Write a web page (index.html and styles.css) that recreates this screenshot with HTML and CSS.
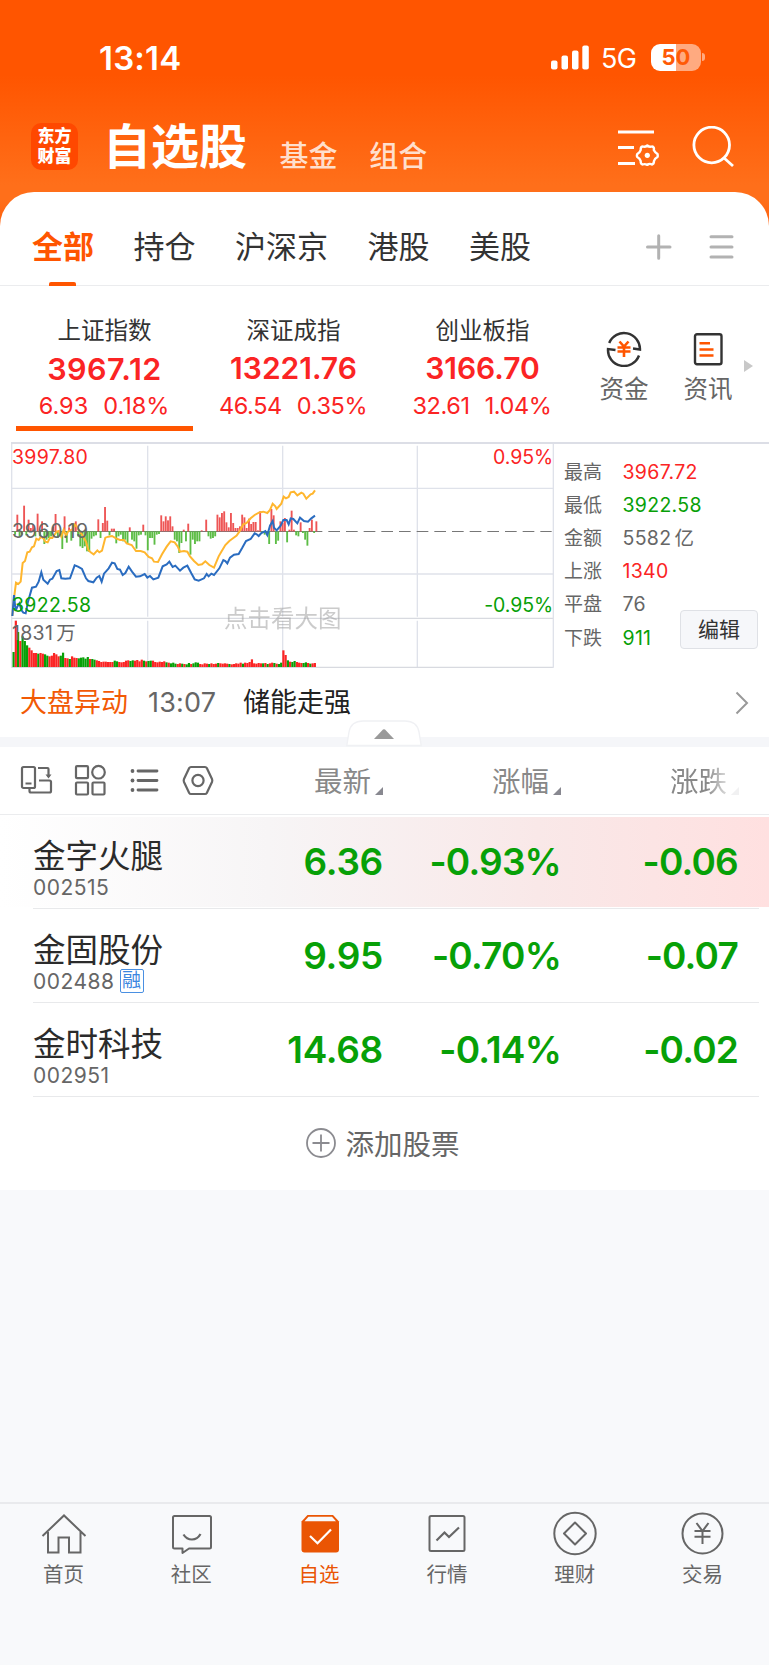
FILE: index.html
```html
<!DOCTYPE html>
<html lang="zh-CN">
<head>
<meta charset="UTF-8">
<title>自选股</title>
<link rel="stylesheet" href="styles.css">
</head>
<body>
<div class="app">
	<div class="status">
		<span class="time">13:14</span>
		<svg class="signal" width="40" height="26" viewBox="0 0 40 26" fill="#fff">
			<rect x="1" y="15.500" width="6.500" height="9" rx="2"/>
			<rect x="11.500" y="10.500" width="6.500" height="14" rx="2"/>
			<rect x="22" y="5.500" width="6.500" height="19" rx="2"/>
			<rect x="32.300" y="0.500" width="6.500" height="24" rx="2"/>
		</svg>
		<span class="net">5G</span>
		<span class="battery">50</span>
		<span class="cap"></span>
	</div>
	<div class="nav">
		<div class="logo">东方<br>财富</div>
		<h1>自选股</h1>
		<span class="sub">基金</span>
		<span class="sub">组合</span>
		<svg class="nav-set" width="42" height="38" viewBox="0 0 42 38" fill="none" stroke="#fff" stroke-width="2.800">
			<path d="M0 4h36M0 19.500h16M0 35.500h17"/>
			<path stroke-width="2.400" stroke-linejoin="round" d="M24.500 18.500Q27 19.500 29.300 17.500Q31.500 19.500 34 18.500Q36.500 19 35.800 22Q37 24.500 39.500 26Q40 28 39.500 29Q36.500 30.500 36 33Q36 36 34 36.500Q31.500 35 29.300 37Q27 35.500 24.500 36.500Q22.500 36 22.700 33Q22 30.500 19.300 29Q18.500 28 19.300 26Q22 24.500 22.700 22Q22.500 19 24.500 18.500Z"/>
			<circle cx="29.300" cy="27.300" r="2.600" fill="#fff" stroke="none"/>
		</svg>
		<svg class="nav-search" width="42" height="42" viewBox="0 0 42 42" fill="none" stroke="#fff" stroke-width="2.800">
			<circle cx="19.700" cy="19" r="17.800"/>
			<path d="M31.500 31.500L41 40"/>
		</svg>
	</div>

	<div class="panel">
		<div class="tabs">
			<span class="on">全部</span>
			<span>持仓</span>
			<span>沪深京</span>
			<span>港股</span>
			<span>美股</span>
			<svg width="88" height="26" viewBox="0 0 88 26" fill="none" stroke="#b2b2b2" stroke-width="3" stroke-linecap="round">
				<path d="M1.500 13h22.500M12.700 1.800v22.500M65 2.700h21M65 13h21M65 23h21"/>
			</svg>
		</div>

		<div class="indexes">
			<div class="idx on">
				<div class="name">上证指数</div>
				<div class="price">3967.12</div>
				<div class="chg"><span>6.93</span><span>0.18%</span></div>
			</div>
			<div class="idx">
				<div class="name">深证成指</div>
				<div class="price">13221.76</div>
				<div class="chg"><span>46.54</span><span>0.35%</span></div>
			</div>
			<div class="idx">
				<div class="name">创业板指</div>
				<div class="price">3166.70</div>
				<div class="chg"><span>32.61</span><span>1.04%</span></div>
			</div>
			<div class="entry">
				<svg width="36" height="36" viewBox="0 0 36 36" fill="none" stroke="#333" stroke-width="2.400">
					<path d="M3.200 12A16 16 0 0 1 34 18.500L27 17.500M33 24.500A16 16 0 0 1 2 18L9.500 19"/>
					<path stroke="#ff5500" stroke-width="2.600" d="M13.500 10.500L18 15.500L22.500 10.500M11.500 16.500h13M11.500 20.500h13M18 15v11"/>
				</svg>
				<span>资金</span>
			</div>
			<div class="entry">
				<svg width="36" height="36" viewBox="0 0 36 36" fill="none" stroke="#333" stroke-width="2.400">
					<rect x="5" y="3.200" width="26.500" height="30" rx="2"/>
					<path stroke="#ff5500" stroke-width="2.600" d="M9.500 12.200h10.500M9.500 18.500h14M9.500 24.500h14"/>
				</svg>
				<span>资讯</span>
			</div>
			<i class="more"></i>
		</div>

		<div class="market">
			<div class="chart">
				<!-- 坐标为3倍图 -->
				<svg width="554" height="227" viewBox="0 21 1662 681" fill="none">
					<g stroke="#dfe2ea" stroke-width="4">
						<path d="M35 21V698M443 32V545M443 557V696M848 32V545M848 557V696M1252 32V545M1252 557V696"/>
						<path d="M35 160H1660M35 417H1660"/>
						<path stroke="#d8dae0" stroke-width="4" d="M35 550H1660M35 697H1660"/>
						<path d="M1660 21V698"/>
					</g>
					<path stroke="#777" stroke-width="3.500" d="M35 289.500H950"/>
					<path stroke="#777" stroke-width="3.500" stroke-dasharray="35 18" d="M932 289.500H1655"/>
					<g id="bars"></g>
					<g id="vol"></g>
					<polyline stroke="#ffb62e" stroke-width="6" points="37,543 42,490 48,443 55,447 62,440 68,384 75,378 82,352 89,350 96,337 102,334 109,311 116,315 123,305 130,310 136,320 143,322 150,308 157,309 163,300 170,290 177,288 184,305 191,284 198,303 204,290 211,286 218,282 223,268 231,276 240,290 247,300 258,320 265,345 272,352 281,358 292,346 298,352 306,347 316,308 325,305 336,303 348,310 360,315 372,315 380,325 395,330 408,348 422,348 434,352 446,366 456,370 462,380 474,381 486,358 500,335 512,319 524,322 534,336 540,350 552,348 562,350 570,364 582,378 595,390 606,388 616,379 628,390 642,398 656,364 664,350 676,330 688,318 696,312 710,302 718,290 730,268 740,264 752,250 764,240 778,232 790,230 802,234 810,225 818,206 826,214 830,222 844,206 851,185 858,190 866,186 872,172 882,170 892,181 904,173 910,176 919,191 932,178 938,176 945,166"/>
					<polyline stroke="#2a6cc0" stroke-width="6" points="37,543 42,480 47,528 52,515 58,505 64,525 70,533 77,535 84,500 96,458 108,455 116,440 124,412 130,434 143,446 150,434 157,431 170,408 178,405 184,430 196,431 210,430 224,391 234,395 246,402 258,430 265,438 280,442 290,428 298,423 305,440 312,416 326,400 336,383 344,385 352,402 360,404 368,420 376,414 386,395 396,410 408,425 420,424 434,417 442,428 450,423 460,433 475,428 488,394 500,388 508,380 518,396 526,392 540,407 550,398 562,392 574,415 584,433 596,437 612,430 620,417 626,424 634,416 642,420 658,400 670,375 676,378 682,385 690,368 702,359 716,357 726,340 738,318 752,312 764,295 770,298 776,303 784,294 796,288 802,300 810,272 818,258 822,278 830,286 842,272 850,255 860,255 866,268 872,250 880,252 892,265 900,248 912,258 924,260 934,250 945,242"/>
				</svg>
				<span class="lb high red">3997.80</span>
				<span class="lb high right red">0.95%</span>
				<span class="lb mid">3960.19</span>
				<span class="lb low green">3922.58</span>
				<span class="lb low right green">-0.95%</span>
				<span class="lb volume">1831<s>万</s></span>
				<span class="tip">点击看大图</span>
			</div>
			<div class="stats">
				<div><b>最高</b><span class="red">3967.72</span></div>
				<div><b>最低</b><span class="green">3922.58</span></div>
				<div><b>金额</b><span>5582<s>亿</s></span></div>
				<div><b>上涨</b><span class="red">1340</span></div>
				<div><b>平盘</b><span>76</span></div>
				<div><b>下跌</b><span class="green">911</span></div>
				<a class="edit">编辑</a>
			</div>
		</div>

		<div class="news">
			<span class="tag">大盘异动</span>
			<span class="at">13:07</span>
			<span class="title">储能走强</span>
			<svg width="14" height="24" viewBox="0 0 14 24" fill="none" stroke="#999" stroke-width="2"><path d="M1.500 1.500L12 12L1.500 22.500"/></svg>
		</div>
		<div class="band">
			<svg class="fold" width="76" height="27" viewBox="0 0 76 27">
				<path d="M.800 25.500L3 12Q5 1 17 1H59Q71 1 73 12L75.200 25.500Z" fill="#fff" stroke="#f0f1f4" stroke-width="1.400"/>
				<path d="M28 19L37 9.500Q38 8.800 39 9.500L48 19Z" fill="#999"/>
			</svg>
		</div>

		<div class="thead">
			<svg class="tools" width="194" height="32" viewBox="0 0 194 32" fill="none" stroke="#666" stroke-width="2.200">
				<rect x="2" y="3" width="13" height="21" rx="1.500"/>
				<path d="M5.500 19.500h6M18 4h9.500q1 0 1 1v8M19 16.500h10.500q1.500 0 1.500 1.500v9q0 1.500-1.500 1.500H11q-1.500 0-1.500-1.500V24"/>
				<path d="M25.500 10.500h6l-3 4z" fill="#666" stroke="none"/>
				<rect x="56" y="2.200" width="12" height="12" rx="1"/>
				<circle cx="78.500" cy="8.200" r="6.300"/>
				<rect x="56" y="18.500" width="12" height="12" rx="1"/>
				<rect x="72.500" y="18.500" width="12" height="12" rx="1"/>
				<path stroke-width="2.800" stroke-linecap="round" d="M118 7h19M118 16.500h19M118 26h19"/>
				<g fill="#666" stroke="none"><circle cx="112.500" cy="7" r="1.900"/><circle cx="112.500" cy="16.500" r="1.900"/><circle cx="112.500" cy="26" r="1.900"/></g>
				<path stroke-linejoin="round" d="M171 3h14q1.200 0 1.800 1l5.200 11q.600 1.500 0 3l-5.200 11q-.600 1-1.800 1h-14q-1.200 0-1.800-1l-5.200-11q-.600-1.500 0-3l5.200-11q.600-1 1.800-1z"/>
				<circle cx="178" cy="16.500" r="5.600"/>
			</svg>
			<span class="c1">最新<i></i></span>
			<span class="c2">涨幅<i></i></span>
			<span class="c3">涨跌<i></i></span>
		</div>

		<div class="row hot">
			<div class="stock"><p>金字火腿</p><em>002515</em></div>
			<span class="c1">6.36</span><span class="c2">-0.93%</span><span class="c3">-0.06</span>
		</div>
		<div class="row">
			<div class="stock"><p>金固股份</p><em>002488<u>融</u></em></div>
			<span class="c1">9.95</span><span class="c2">-0.70%</span><span class="c3">-0.07</span>
		</div>
		<div class="row">
			<div class="stock"><p>金时科技</p><em>002951</em></div>
			<span class="c1">14.68</span><span class="c2">-0.14%</span><span class="c3">-0.02</span>
		</div>
		<div class="add">
			<svg width="32" height="32" viewBox="0 0 32 32" fill="none" stroke="#8b8b90" stroke-width="1.800"><circle cx="16" cy="16" r="14"/><path d="M7.500 16h17M16 7.500v17"/></svg>
			<span>添加股票</span>
		</div>
	</div>

	<div class="tabbar">
		<div>
			<svg width="48" height="48" viewBox="0 0 48 48" fill="none" stroke="#666" stroke-width="2"><path d="M2.500 28L24 7.500L45.500 28M8 24V44.500H18.500V29.500H29V44.500H40.500V24"/></svg>
			<span>首页</span>
		</div>
		<div>
			<svg width="48" height="48" viewBox="0 0 48 48" fill="none" stroke="#666" stroke-width="2" stroke-linejoin="round"><path d="M6.500 8H41.500Q43 8 43 9.500V39Q43 40.500 41.500 40.500H21L14.500 45V40.500H6.500Q5 40.500 5 39V9.500Q5 8 6.500 8Z"/><path stroke-width="2.200" d="M15.500 26.500Q18.500 31.500 24 31.500T32.500 26"/></svg>
			<span>社区</span>
		</div>
		<div class="on">
			<svg width="48" height="48" viewBox="0 0 48 48" fill="none"><path d="M11.500 7H37L43 13.500V41.500Q43 44.500 40 44.500H8.500Q5.500 44.500 5.500 41.500V13.500Z" fill="#ea5504"/><path d="M12.500 8.800H36L40 13.200H8.500Z" fill="#f8f9fb"/><path stroke="#fff" stroke-width="2.200" d="M14 28L21.500 35.200L35 21.500"/></svg>
			<span>自选</span>
		</div>
		<div>
			<svg width="48" height="48" viewBox="0 0 48 48" fill="none" stroke="#666" stroke-width="2"><rect x="6.500" y="8" width="35" height="35" rx="1.500"/><path stroke-width="2.200" d="M13.500 32.500L21.500 24.500L26 29L36 19.500"/></svg>
			<span>行情</span>
		</div>
		<div>
			<svg width="48" height="48" viewBox="0 0 48 48" fill="none" stroke="#666" stroke-width="2"><circle cx="24" cy="25.500" r="20.700"/><path stroke-linejoin="round" d="M24 14.500L35 25.500L24 36.500L13 25.500Z"/></svg>
			<span>理财</span>
		</div>
		<div>
			<svg width="48" height="48" viewBox="0 0 48 48" fill="none" stroke="#666" stroke-width="2"><circle cx="23.500" cy="25.500" r="20"/><path d="M17.500 15L23.500 23L29.500 15M15.500 23H31.500M15.500 28.800H31.500M23.500 23V36"/></svg>
			<span>交易</span>
		</div>
	</div>
</div>
<script src="chart.js"></script>
</body>
</html>
```

FILE: styles.css
```css
* {
margin:0;
padding:0;
box-sizing:border-box;
}
body {
background:#f8f9fb;
font-family:Inter,"Noto Sans CJK SC",sans-serif;
color:#333;
}
svg {
display:block;
flex:none;
}
i, em {
font-style:normal;
}
s {
margin-left:3px;
text-decoration:none;
}
.app {
width:769px;
height:1665px;
display:flex;
flex-direction:column;
background:linear-gradient(#ff5500 0,#ff5500 75px,#ff6f1a 185px,#ff6f1a 200px,#ff5a08 235px) no-repeat;
background-size:100% 235px;
white-space:nowrap;
}
.red {
color:#fb2424;
}
.green {
color:#07a007;
}

/* 状态栏 */
.status {
height:114px;
padding-left:99px;
display:flex;
align-items:center;
color:#fff;
}
.time {
width:451px;
padding-top:1px;
font-size:33px;
font-weight:600;
letter-spacing:0.2px;
}
.signal {
margin-top:1px;
}
.net {
width:50px;
margin-left:11px;
font-size:27px;
letter-spacing:-0.7px;
padding-top:3px;
}
.battery {
width:50px;
height:27px;
line-height:27px;
border-radius:9px;
background:linear-gradient(90deg,#fff 25px,#ffaa80 25px);
color:#ff5a05;
font-size:22px;
font-weight:700;
text-align:center;
}
.cap {
width:3px;
height:8px;
margin-left:1px;
border-radius:0 4px 4px 0;
background:#ffaa80;
}

/* 导航 */
.nav {
height:78px;
padding:0 35px 13px 31px;
display:flex;
align-items:center;
color:#fff;
}
.logo {
width:47px;
height:47px;
padding-top:4px;
border-radius:10px;
background:#ff4800;
font-size:17px;
line-height:19.5px;
font-weight:900;
text-align:center;
}
.nav h1 {
width:177px;
margin-left:25px;
font-size:48px;
line-height:60px;
}
.nav .sub {
width:90px;
padding-top:20px;
font-size:29px;
line-height:34px;
font-weight:500;
color:#ffdfcd;
}
.nav-set {
margin-left:159px;
}
.nav-search {
margin-left:32px;
}

.panel {
height:998px;
background:#fff;
border-radius:34px 34px 0 0;
}
.tabs {
height:94px;
padding:17px 0 0 32px;
display:flex;
align-items:center;
border-bottom:1px solid #ebecee;
font-size:31px;
line-height:76px;
}
.tabs span {
margin-right:39.5px;
}
.tabs .on {
position:relative;
color:#ff5500;
font-weight:700;
}
.tabs .on:after {
content:"";
position:absolute;
left:17px;
bottom:-1px;
width:27px;
height:4px;
border-radius:2px 2px 0 0;
background:#ff5500;
}
.tabs svg {
margin-left:75px;
}

/* 指数 */
.indexes {
height:156px;
padding-left:16px;
display:flex;
}
.idx {
width:177px;
height:145px;
margin-right:12px;
padding-top:29px;
text-align:center;
border-bottom:5px solid transparent;
}
.idx.on {
border-color:#ff5500;
}
.idx .name {
font-size:23.5px;
line-height:32px;
}
.idx .price {
height:44px;
font-size:30px;
line-height:43px;
font-weight:600;
color:#fb2424;
}
.idx.on .price {
font-size:30.5px;
letter-spacing:0.5px;
}
.idx .chg {
display:flex;
justify-content:center;
gap:15px;
padding-right:1px;
font-size:23.5px;
line-height:30px;
letter-spacing:-0.4px;
color:#fb2424;
}
.idx.on .chg {
letter-spacing:0;
}
.entry {
width:84px;
padding-top:45px;
display:flex;
flex-direction:column;
align-items:center;
font-size:24.5px;
line-height:45px;
color:#666;
}
.more {
width:0;
height:0;
margin:74px 0 0 -6px;
border:6px solid transparent;
border-left:9px solid #c8c8c8;
border-right:0;
}
.idx + .entry {
margin-left:-1px;
}

/* 分时图 */
.market {
height:227px;
display:flex;
}
.chart {
position:relative;
width:554px;
}
.chart:before, .stats:before {
content:"";
position:absolute;
left:11px;
right:0;
top:0;
height:2px;
background:#dcdee6;
}
.stats:before {
left:0;
}
.lb {
position:absolute;
left:12px;
font-size:19.5px;
line-height:22px;
letter-spacing:0.3px;
}
.right {
left:auto;
right:1px;
letter-spacing:-0.1px;
}
.high {
top:4px;
}
.mid {
top:78px;
color:#666;
letter-spacing:0.7px;
}
.low {
top:152px;
}
.volume {
top:180px;
color:#666;
}
.tip {
position:absolute;
left:224px;
top:162px;
font-size:23.5px;
line-height:30px;
color:#999;
opacity:.5;
}
.stats {
position:relative;
width:215px;
padding:13.5px 0 0 10px;
font-size:19.5px;
line-height:33.2px;
letter-spacing:0.3px;
color:#666;
}
.stats div {
display:flex;
}
.stats b {
width:58.5px;
font-size:19px;
font-weight:400;
letter-spacing:0;
}
.edit {
position:absolute;
left:126px;
top:168px;
width:78px;
height:39px;
border:1px solid #dfe1e6;
border-radius:4px;
background:#f6f7fa;
font-size:21px;
line-height:37px;
letter-spacing:0;
text-align:center;
color:#333;
}

.news {
height:68px;
padding:0 20px 0 20px;
display:flex;
align-items:center;
font-size:27px;
line-height:36px;
}
.tag {
width:128px;
color:#f25a05;
}
.at {
width:95px;
color:#666;
letter-spacing:0.2px;
}
.title {
color:#222;
flex:1;
}
.band {
position:relative;
height:10px;
background:#f5f6f9;
}
.fold {
position:absolute;
left:346px;
top:-17px;
}

/* 表头 */
.thead {
height:68px;
padding-bottom:1px;
display:flex;
align-items:center;
font-size:28.5px;
line-height:36px;
color:#888;
border-bottom:1px solid #ebecee;
}
.tools {
margin-left:20px;
}
.thead span {
padding-top:3px;
display:flex;
justify-content:flex-end;
align-items:center;
}
.thead i {
margin:18px 0 0 4px;
border-bottom:8px solid #888890;
border-left:8px solid transparent;
}
.thead .c1 {
width:169px;
}
.thead .c3 {
-webkit-mask-image:linear-gradient(90deg,#000 145px,rgba(0,0,0,.12) 171px);
mask-image:linear-gradient(90deg,#000 145px,rgba(0,0,0,.12) 171px);
}
.c1 {
width:221px;
}
.c2, .c3 {
width:178px;
}

.row {
position:relative;
height:94px;
padding-left:33px;
display:flex;
}
.row:after {
content:"";
position:absolute;
left:33px;
right:10px;
bottom:0;
height:1px;
background:#e8e9eb;
}
.row.hot {
background:linear-gradient(90deg,#fff,#f7f5f6 35%,#f9e8e8 70%,#ffe0e0) no-repeat 0 2px/100% 90px;
}
.row > span {
padding-top:24px;
text-align:right;
font-size:37px;
line-height:46px;
font-weight:600;
letter-spacing:-0.3px;
color:#07a007;
}
.row .c1 {
width:220px;
}
.row > .c2, .row > .c3 {
letter-spacing:-0.8px;
}
.row > .c3 {
width:177px;
}
.stock {
width:130px;
padding-top:22px;
}
.stock p {
font-size:32.5px;
line-height:40px;
color:#2b2b2b;
}
.stock em {
display:flex;
align-items:center;
font-size:21px;
line-height:21px;
letter-spacing:0.5px;
color:#666;
}
.stock u {
width:24px;
height:24px;
margin:-2px 0 -1px 5px;
border:1px solid #4a90e2;
border-radius:2px;
color:#3c86e0;
font-size:19px;
line-height:22px;
letter-spacing:0;
text-align:center;
text-decoration:none;
}
.add {
height:92px;
padding-right:4px;
display:flex;
align-items:center;
justify-content:center;
gap:8px;
font-size:28.5px;
line-height:36px;
color:#666;
}
.add span {
padding-top:3px;
}

/* 底部 */
.tabbar {
height:163px;
margin-top:auto;
padding-right:2px;
border-top:2px solid #e9eaed;
display:flex;
}
.tabbar div {
flex:1;
padding-top:4px;
display:flex;
flex-direction:column;
align-items:center;
font-size:20.5px;
line-height:38px;
color:#666;
}
.tabbar span {
padding-right:1px;
}
.tabbar .on {
color:#ea5504;
}
```

FILE: chart.js
```js
//正数红色向上，负数绿色向下
var bars=[-10,50,-15,-10,77,-12,35,10,20,-15,53,-15,30,-38,-25,-20,-15,15,52,-20,-15,-53,45,-34,12,-28,20,30,-15,-45,
-50,-45,-60,-62,-22,-15,-12,36,-20,25,73,32,-12,8,8,-36,-15,-10,-30,-25,-35,12,-25,-30,-52,-12,-10,20,-12,-57,
-20,-20,-40,-10,-8,48,30,45,33,45,15,-25,-30,-65,-35,5,-30,23,-70,-25,-38,-30,-30,3,0,35,-15,-22,-20,-15,
50,42,55,60,27,12,55,25,10,10,15,50,42,10,38,22,28,28,3,60,-5,-10,-12,-38,67,48,-38,-28,30,25,
40,-33,5,62,5,-12,-15,27,-5,-25,-43,10,35,-5,30];
//成交量，负数为绿色
var vol=[-45,139,-105,78,-92,-78,-65,58,50,42,42,-40,42,40,-38,-34,32,34,42,38,32,-34,-43,27,26,-24,32,28,27,-26,
-28,-29,-25,-30,24,-24,-22,20,18,15,16,16,15,15,15,-19,-17,15,14,15,19,20,-18,-20,19,21,17,22,-19,17,
-18,-19,19,15,14,16,15,17,-14,13,-11,-13,-10,9,11,-10,9,-8,-12,9,-11,-14,-13,9,8,11,10,-9,11,9,
10,-12,11,10,11,10,-9,8,9,11,10,13,-10,13,12,15,23,11,10,12,11,-11,12,-9,11,13,-12,10,-9,-13,
50,36,-20,16,-15,-18,15,13,12,-12,-14,12,-10,11,12];

function draw(id,data,left,base,down,red,green) {
	var html='';
	for (var i=0;i<data.length;i++) {
		var h=Math.abs(data[i]);
		var x=left+i*6.745-2.5;
		var y=(down && data[i]<0) ? base : base-h;
		html+='<rect x="'+x.toFixed(1)+'" y="'+y+'" width="'+(down?5.6:6.6)+'" height="'+h+'" fill="'+(data[i]<0?green:red)+'"/>';
	}
	document.getElementById(id).innerHTML=html;
}
draw('bars',bars,45,289,true,'#ee5555','#5cbd45');
draw('vol',vol,40,696,false,'#fb2424','#07a007');
```
